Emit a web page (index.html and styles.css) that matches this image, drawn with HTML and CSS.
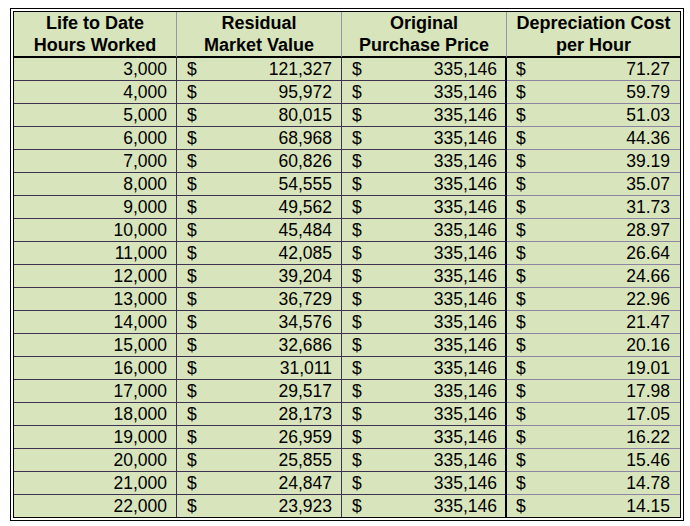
FILE: index.html
```html
<!DOCTYPE html>
<html>
<head>
<meta charset="utf-8">
<link rel="stylesheet" href="styles.css">
</head>
<body>
<div class="frame">
<table class="dep">
<colgroup>
<col class="c1"><col class="c2"><col class="c3"><col class="c4">
</colgroup>
<thead>
<tr>
<th>Life to Date<br>Hours Worked</th>
<th>Residual<br>Market Value</th>
<th>Original<br>Purchase Price</th>
<th class="last">Depreciation Cost<br>per Hour</th>
</tr>
</thead>
<tbody>
<tr><td class="hrs">3,000</td><td class="m"><div class="acc"><span>$</span><span>121,327</span></div></td><td class="m p"><div class="acc"><span>$</span><span>335,146</span></div></td><td class="m last"><div class="acc"><span>$</span><span>71.27</span></div></td></tr>
<tr><td class="hrs">4,000</td><td class="m"><div class="acc"><span>$</span><span>95,972</span></div></td><td class="m p"><div class="acc"><span>$</span><span>335,146</span></div></td><td class="m last"><div class="acc"><span>$</span><span>59.79</span></div></td></tr>
<tr><td class="hrs">5,000</td><td class="m"><div class="acc"><span>$</span><span>80,015</span></div></td><td class="m p"><div class="acc"><span>$</span><span>335,146</span></div></td><td class="m last"><div class="acc"><span>$</span><span>51.03</span></div></td></tr>
<tr><td class="hrs">6,000</td><td class="m"><div class="acc"><span>$</span><span>68,968</span></div></td><td class="m p"><div class="acc"><span>$</span><span>335,146</span></div></td><td class="m last"><div class="acc"><span>$</span><span>44.36</span></div></td></tr>
<tr><td class="hrs">7,000</td><td class="m"><div class="acc"><span>$</span><span>60,826</span></div></td><td class="m p"><div class="acc"><span>$</span><span>335,146</span></div></td><td class="m last"><div class="acc"><span>$</span><span>39.19</span></div></td></tr>
<tr><td class="hrs">8,000</td><td class="m"><div class="acc"><span>$</span><span>54,555</span></div></td><td class="m p"><div class="acc"><span>$</span><span>335,146</span></div></td><td class="m last"><div class="acc"><span>$</span><span>35.07</span></div></td></tr>
<tr><td class="hrs">9,000</td><td class="m"><div class="acc"><span>$</span><span>49,562</span></div></td><td class="m p"><div class="acc"><span>$</span><span>335,146</span></div></td><td class="m last"><div class="acc"><span>$</span><span>31.73</span></div></td></tr>
<tr><td class="hrs">10,000</td><td class="m"><div class="acc"><span>$</span><span>45,484</span></div></td><td class="m p"><div class="acc"><span>$</span><span>335,146</span></div></td><td class="m last"><div class="acc"><span>$</span><span>28.97</span></div></td></tr>
<tr><td class="hrs">11,000</td><td class="m"><div class="acc"><span>$</span><span>42,085</span></div></td><td class="m p"><div class="acc"><span>$</span><span>335,146</span></div></td><td class="m last"><div class="acc"><span>$</span><span>26.64</span></div></td></tr>
<tr><td class="hrs">12,000</td><td class="m"><div class="acc"><span>$</span><span>39,204</span></div></td><td class="m p"><div class="acc"><span>$</span><span>335,146</span></div></td><td class="m last"><div class="acc"><span>$</span><span>24.66</span></div></td></tr>
<tr><td class="hrs">13,000</td><td class="m"><div class="acc"><span>$</span><span>36,729</span></div></td><td class="m p"><div class="acc"><span>$</span><span>335,146</span></div></td><td class="m last"><div class="acc"><span>$</span><span>22.96</span></div></td></tr>
<tr><td class="hrs">14,000</td><td class="m"><div class="acc"><span>$</span><span>34,576</span></div></td><td class="m p"><div class="acc"><span>$</span><span>335,146</span></div></td><td class="m last"><div class="acc"><span>$</span><span>21.47</span></div></td></tr>
<tr><td class="hrs">15,000</td><td class="m"><div class="acc"><span>$</span><span>32,686</span></div></td><td class="m p"><div class="acc"><span>$</span><span>335,146</span></div></td><td class="m last"><div class="acc"><span>$</span><span>20.16</span></div></td></tr>
<tr><td class="hrs">16,000</td><td class="m"><div class="acc"><span>$</span><span>31,011</span></div></td><td class="m p"><div class="acc"><span>$</span><span>335,146</span></div></td><td class="m last"><div class="acc"><span>$</span><span>19.01</span></div></td></tr>
<tr><td class="hrs">17,000</td><td class="m"><div class="acc"><span>$</span><span>29,517</span></div></td><td class="m p"><div class="acc"><span>$</span><span>335,146</span></div></td><td class="m last"><div class="acc"><span>$</span><span>17.98</span></div></td></tr>
<tr><td class="hrs">18,000</td><td class="m"><div class="acc"><span>$</span><span>28,173</span></div></td><td class="m p"><div class="acc"><span>$</span><span>335,146</span></div></td><td class="m last"><div class="acc"><span>$</span><span>17.05</span></div></td></tr>
<tr><td class="hrs">19,000</td><td class="m"><div class="acc"><span>$</span><span>26,959</span></div></td><td class="m p"><div class="acc"><span>$</span><span>335,146</span></div></td><td class="m last"><div class="acc"><span>$</span><span>16.22</span></div></td></tr>
<tr><td class="hrs">20,000</td><td class="m"><div class="acc"><span>$</span><span>25,855</span></div></td><td class="m p"><div class="acc"><span>$</span><span>335,146</span></div></td><td class="m last"><div class="acc"><span>$</span><span>15.46</span></div></td></tr>
<tr><td class="hrs">21,000</td><td class="m"><div class="acc"><span>$</span><span>24,847</span></div></td><td class="m p"><div class="acc"><span>$</span><span>335,146</span></div></td><td class="m last"><div class="acc"><span>$</span><span>14.78</span></div></td></tr>
<tr><td class="hrs">22,000</td><td class="m"><div class="acc"><span>$</span><span>23,923</span></div></td><td class="m p"><div class="acc"><span>$</span><span>335,146</span></div></td><td class="m last"><div class="acc"><span>$</span><span>14.15</span></div></td></tr>
</tbody>
</table>
</div>
</body>
</html>
```

FILE: styles.css
```css
html, body {
  margin: 0;
  background: #ffffff;
}
body {
  padding: 8px 0 0 10px;
  font-family: "Liberation Sans", Arial, sans-serif;
  color: #000;
}
.frame {
  display: inline-block;
  border: 1px solid #000;
  padding: 2px;
  background: #fff;
}
.dep {
  border: 1px solid #000;
  border-spacing: 0;
  table-layout: fixed;
  width: 668px;
  background: #d8e4bc;
}
.c1 { width: 163px; }
.c2 { width: 165px; }
.c3 { width: 165px; }
.c4 { width: 173px; }

.dep th, .dep td {
  box-sizing: border-box;
  padding: 0;
  vertical-align: middle;
}
.dep th {
  height: 46px;
  font-weight: bold;
  font-size: 18px;
  line-height: 22px;
  text-align: center;
  border-bottom: 2px solid #000;
  border-right: 1px solid #9a93ad;
}
.dep th.last { border-right: 0; }

.dep td {
  height: 23px;
  font-size: 17.5px;
  line-height: 22px;
  border-bottom: 1px solid #3f3151;
  border-right: 1px solid #3f3151;
}
.dep tbody tr:last-child td {
  height: 22px;
  border-bottom: 0;
}
.dep td.p { border-right: 2px solid #000; }
.dep td.last {
  border-right: 0;
  border-bottom-color: #8d85a3;
}
.hrs {
  text-align: right;
  padding-right: 9px !important;
}
.acc {
  display: flex;
  justify-content: space-between;
  padding: 0 9px 0 10px;
}
.p .acc { padding-right: 8px; }
.last .acc { padding-right: 10px; padding-left: 9px; }
```
